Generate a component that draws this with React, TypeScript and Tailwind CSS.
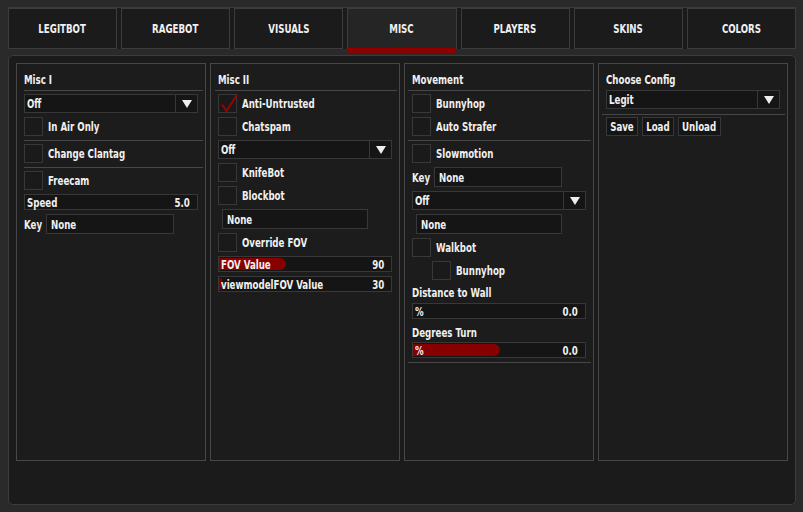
import React from "react";

const FONT =
  "[font-family:'DejaVu_Sans_Condensed','Liberation_Sans_Narrow','Liberation_Sans',Arial,sans-serif] [font-stretch:condensed]";

function T({ children, o = "origin-left" }: { children: React.ReactNode; o?: string }) {
  return (
    <span className={`inline-block whitespace-nowrap leading-none scale-x-[0.74] ${o}`}>
      {children}
    </span>
  );
}

function Box({ checked }: { checked?: boolean }) {
  return (
    <div className="relative w-[19px] h-[19px] shrink-0 border border-[#383838] bg-[#1a1a1a]">
      {checked && (
        <svg
          className="absolute left-0 top-0 overflow-visible"
          width="19"
          height="19"
          viewBox="0 0 19 19"
        >
          <path d="M3 9.5 L7.5 16 L18 0" fill="none" stroke="#a30000" strokeWidth="1.8" />
        </svg>
      )}
    </div>
  );
}

function Check({
  label,
  checked,
  cls = "mt-[4px]",
}: {
  label: string;
  checked?: boolean;
  cls?: string;
}) {
  return (
    <div className={`flex items-center h-[19px] ${cls}`}>
      <Box checked={checked} />
      <span className="ml-[5px] flex items-center">
        <T>{label}</T>
      </span>
    </div>
  );
}

function Sep({ cls }: { cls: string }) {
  return <div className={`h-px bg-[#474747] ${cls}`} />;
}

function Combo({ value, cls = "mt-[4px]" }: { value: string; cls?: string }) {
  return (
    <div className={`flex h-[19px] border border-[#383838] bg-[#151515] ${cls}`}>
      <div className="flex-1 flex items-center pl-[2px]">
        <T>{value}</T>
      </div>
      <div className="w-[22px] border-l border-[#383838] flex items-center justify-center">
        <svg width="10" height="8" viewBox="0 0 10 8">
          <path d="M0 0 H10 L5 8 Z" fill="#eeeeee" />
        </svg>
      </div>
    </div>
  );
}

function Slider({
  label,
  value,
  fill,
  cls = "mt-[4px]",
}: {
  label: string;
  value: string;
  fill: number;
  cls?: string;
}) {
  return (
    <div className={`relative h-[16px] border border-[#383838] bg-[#151515] ${cls}`}>
      {fill > 0 && (
        <div
          className="absolute left-0 top-[1px] bottom-[1px] rounded-r-full bg-[#870000]"
          style={{ width: fill }}
        />
      )}
      <div className="relative h-full flex items-center justify-between pl-[2px] pr-[7px]">
        <T>{label}</T>
        <T o="origin-right">{value}</T>
      </div>
    </div>
  );
}

function Input({ value, cls }: { value: string; cls: string }) {
  return (
    <div
      className={`h-[20px] border border-[#383838] bg-[#151515] flex items-center pl-[4px] ${cls}`}
    >
      <T>{value}</T>
    </div>
  );
}

function KeyRow({ cls = "mt-[4px]" }: { cls?: string }) {
  return (
    <div className={`flex items-center ${cls}`}>
      <span className="w-[22px] flex items-center">
        <T>Key</T>
      </span>
      <Input value="None" cls="w-[128px]" />
    </div>
  );
}

function Label({ text, cls }: { text: string; cls: string }) {
  return (
    <div className={`h-[12px] flex items-center ${cls}`}>
      <T>{text}</T>
    </div>
  );
}

function Group({ title, children }: { title: string; children: React.ReactNode }) {
  return (
    <div className="w-[190px] h-[398px] border border-[#474747] bg-[#1c1c1c] px-[7px] pt-[9px] flex flex-col">
      <Label text={title} cls="" />
      {children}
    </div>
  );
}

function Btn({ text, cls }: { text: string; cls: string }) {
  return (
    <div
      className={`h-[19px] border border-[#383838] bg-[#151515] flex items-center justify-center ${cls}`}
    >
      <T o="origin-center">{text}</T>
    </div>
  );
}

const TABS = ["LEGITBOT", "RAGEBOT", "VISUALS", "MISC", "PLAYERS", "SKINS", "COLORS"];

export default function App() {
  return (
    <div
      className={`w-[803px] h-[512px] bg-[#2a2a2a] overflow-hidden text-[13px] font-bold text-[#f0f0f0] ${FONT}`}
    >
      <div className="pt-[7px] pl-[8px] pr-[7px]">
        <div className="flex gap-[4px] h-[42px] bg-[#1b1b1b] border-t border-[#3a3a3a]">
          {TABS.map((t) => (
            <div
              key={t}
              className={`relative flex-1 border border-[#3c3c3c] flex items-center justify-center ${
                t === "MISC" ? "bg-[#252525]" : "bg-[#1b1b1b]"
              }`}
            >
              <T o="origin-center">{t}</T>
              {t === "MISC" && (
                <div className="absolute left-0 right-0 top-full h-[5px] bg-[#8c0000]" />
              )}
            </div>
          ))}
        </div>
      </div>

      <div className="ml-[8px] mt-[6px] w-[788px] h-[450px] rounded-[5px] border border-[#3c3c3c] bg-[#1b1b1b] pl-[7px] pt-[7px]">
        <div className="flex gap-[4px]">
          <Group title="Misc I">
            <Sep cls="mt-[5px] -mr-[5px]" />
            <Combo value="Off" cls="mt-[3px]" />
            <Check label="In Air Only" />
            <Sep cls="mt-[4px] -mr-[5px]" />
            <Check label="Change Clantag" cls="mt-[3px]" />
            <Sep cls="mt-[4px] -mr-[5px]" />
            <Check label="Freecam" cls="mt-[3px]" />
            <Slider label="Speed" value="5.0" fill={0} />
            <KeyRow />
          </Group>

          <Group title="Misc II">
            <Sep cls="mt-[5px] -ml-[3px] -mr-[5px]" />
            <Check label="Anti-Untrusted" checked cls="mt-[3px]" />
            <Check label="Chatspam" />
            <Combo value="Off" />
            <Check label="KnifeBot" />
            <Check label="Blockbot" />
            <Input value="None" cls="mt-[4px] ml-[4px] w-[146px]" />
            <Check label="Override FOV" />
            <Slider label="FOV Value" value="90" fill={67} />
            <Slider label="viewmodelFOV Value" value="30" fill={3} />
          </Group>

          <Group title="Movement">
            <Sep cls="mt-[5px] -ml-[4px] -mr-[5px]" />
            <Check label="Bunnyhop" cls="mt-[3px]" />
            <Check label="Auto Strafer" />
            <Sep cls="mt-[4px] -ml-[4px] -mr-[5px]" />
            <Check label="Slowmotion" cls="mt-[3px]" />
            <KeyRow />
            <Combo value="Off" />
            <Input value="None" cls="mt-[4px] ml-[4px] w-[146px]" />
            <Check label="Walkbot" />
            <Check label="Bunnyhop" cls="mt-[4px] ml-[20px]" />
            <Label text="Distance to Wall" cls="mt-[6px]" />
            <Slider label="%" value="0.0" fill={0} cls="mt-[5px]" />
            <Label text="Degrees Turn" cls="mt-[7px]" />
            <Slider label="%" value="0.0" fill={87} cls="mt-[4px]" />
            <Sep cls="mt-[4px] -ml-[4px] -mr-[5px]" />
          </Group>

          <Group title="Choose Config">
            <Combo value="Legit" cls="mt-[5px]" />
            <Sep cls="mt-[5px] -ml-[4px] -mr-[5px]" />
            <div className="mt-[2px] flex gap-[4px]">
              <Btn text="Save" cls="w-[32px]" />
              <Btn text="Load" cls="w-[32px]" />
              <Btn text="Unload" cls="w-[43px]" />
            </div>
          </Group>
        </div>
      </div>
    </div>
  );
}
